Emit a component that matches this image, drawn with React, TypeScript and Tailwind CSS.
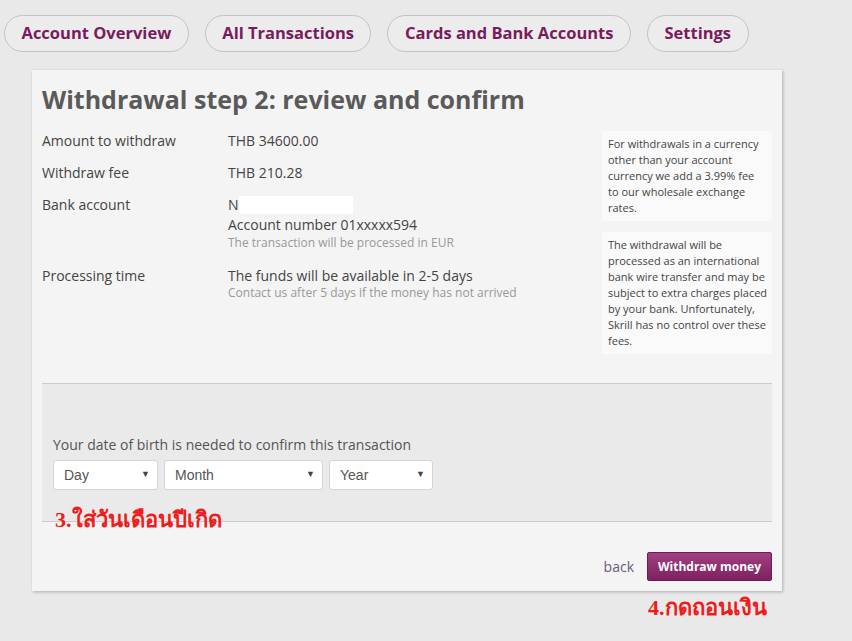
import React from 'react';

const tabs = ['Account Overview', 'All Transactions', 'Cards and Bank Accounts', 'Settings'];

const note1 = ['For withdrawals in a currency', 'other than your account', 'currency we add a 3.99% fee', 'to our wholesale exchange', 'rates.'];
const note2 = [
  'The withdrawal will be',
  'processed as an international',
  'bank wire transfer and may be',
  'subject to extra charges placed',
  'by your bank. Unfortunately,',
  'Skrill has no control over these',
  'fees.',
];

const Row = ({ label, children }: { label: string; children: React.ReactNode }) => (
  <div className="flex text-[14px] leading-[20px] text-[#444]">
    <div className="w-[186px] shrink-0">{label}</div>
    <div className="flex-1">{children}</div>
  </div>
);

const FakeSelect = ({ label, width }: { label: string; width: string }) => (
  <div
    className={`${width} h-[30px] bg-white border border-[#d4d4d4] rounded-[3px] flex items-center justify-between pl-[10px] pr-[7px] text-[14px] text-[#555]`}
    style={{ fontFamily: '"Liberation Sans", Arial, sans-serif' }}
  >
    <span>{label}</span>
    <span className="text-[9px] text-[#444]">▼</span>
  </div>
);

const Note = ({ lines }: { lines: string[] }) => (
  <div className="bg-[#fafafa] pl-[6px] pr-[2px] pt-[5px] pb-[5px] whitespace-nowrap">
    {lines.map((l) => (
      <div key={l}>{l}</div>
    ))}
  </div>
);

export default function App() {
  return (
    <div
      className="w-[852px] h-[641px] bg-[#e9e9e9] overflow-hidden relative"
      style={{ fontFamily: '"Open Sans", "Noto Sans", sans-serif' }}
    >
      {/* Top nav */}
      <div className="flex gap-[16px] pl-[4px] pt-[15px]">
        {tabs.map((t) => (
          <div
            key={t}
            className="h-[37px] px-[16.5px] flex items-center rounded-full border border-[#c3c3c3] bg-[#ececec] text-[16.5px] font-bold text-[#7a1b5c]"
          >
            {t}
          </div>
        ))}
      </div>

      {/* Card */}
      <div className="ml-[32px] mt-[18px] w-[750px] bg-[#f4f4f4] shadow-[1px_1px_3px_rgba(0,0,0,0.25)] px-[10px] pb-[10px]">
        <h1 className="pt-[11px] text-[25px] leading-[36px] font-bold text-[#5a5a5a]">
          Withdrawal step 2: review and confirm
        </h1>

        <div className="flex mt-[14px]">
          <div className="flex-1 flex flex-col gap-[12px]">
            <Row label="Amount to withdraw">THB 34600.00</Row>
            <Row label="Withdraw fee">THB 210.28</Row>
            <Row label="Bank account">
              <div className="flex items-center h-[20px]">
                <span>N</span>
                <span className="w-[114px] h-[18px] bg-white" />
              </div>
              <div>Account number 01xxxxx594</div>
              <div className="text-[12px] leading-[15px] text-[#999]">The transaction will be processed in EUR</div>
            </Row>
            <div className="mt-[4px]">
              <Row label="Processing time">
                <div>The funds will be available in 2-5 days</div>
                <div className="text-[12px] leading-[14px] text-[#999]">
                  Contact us after 5 days if the money has not arrived
                </div>
              </Row>
            </div>
          </div>

          <div className="w-[170px] shrink-0 flex flex-col gap-[11px] text-[11px] leading-[16px] text-[#444]">
            <Note lines={note1} />
            <Note lines={note2} />
          </div>
        </div>

        {/* DOB section */}
        <div className="mt-[29px] bg-[#eaeaea] border-t border-b border-[#cccccc] pl-[11px] pt-[51px] pb-[31px]">
          <div className="text-[14px] leading-[20px] text-[#555]">
            Your date of birth is needed to confirm this transaction
          </div>
          <div className="flex gap-[6px] mt-[5px]">
            <FakeSelect label="Day" width="w-[105px]" />
            <FakeSelect label="Month" width="w-[159px]" />
            <FakeSelect label="Year" width="w-[104px]" />
          </div>
        </div>

        {/* Footer */}
        <div className="flex justify-end items-center gap-[13px] mt-[30px]">
          <span className="text-[14px] text-[#6b5b7b]">back</span>
          <button className="h-[29px] w-[125px] rounded-[2px] border border-[#6e1a55] bg-gradient-to-b from-[#a23f82] to-[#7e215f] text-white text-[12px] font-bold">
            Withdraw money
          </button>
        </div>
      </div>

      {/* Annotations */}
      <div
        className="absolute left-[55px] top-[505px] text-[22px] leading-[30px] font-bold text-[#ee1c1c]"
        style={{ fontFamily: '"Liberation Serif", serif' }}
      >
        3.ใส่วันเดือนปีเกิด
      </div>
      <div
        className="absolute left-[648px] top-[593px] text-[22px] leading-[30px] font-bold text-[#ee1c1c]"
        style={{ fontFamily: '"Liberation Serif", serif' }}
      >
        4.กดถอนเงิน
      </div>
    </div>
  );
}
